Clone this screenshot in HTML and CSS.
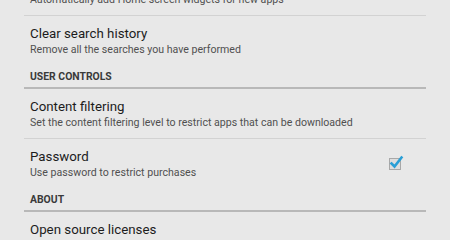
FILE: index.html
```html
<!DOCTYPE html>
<html>
<head>
<meta charset="utf-8">
<link rel="stylesheet" href="styles.css">
</head>
<body>
<div class="list">
  <div class="item">
    <div class="text">
      <div class="title">Add icon to Home screen</div>
      <div class="summary">Automatically add Home screen widgets for new apps</div>
    </div>
  </div>
  <div class="divider"></div>
  <div class="item">
    <div class="text">
      <div class="title">Clear search history</div>
      <div class="summary">Remove all the searches you have performed</div>
    </div>
  </div>
  <div class="header">USER CONTROLS</div>
  <div class="divider thick"></div>
  <div class="item">
    <div class="text">
      <div class="title">Content filtering</div>
      <div class="summary">Set the content filtering level to restrict apps that can be downloaded</div>
    </div>
  </div>
  <div class="divider"></div>
  <div class="item">
    <div class="text">
      <div class="title">Password</div>
      <div class="summary">Use password to restrict purchases</div>
    </div>
    <svg class="check" width="18" height="18" viewBox="0 0 18 18">
      <rect x="2.5" y="4.5" width="11" height="11" fill="#dedede" stroke="#a8a8a8" stroke-width="1"/>
      <path d="M4.5 9.5 L7.5 12.5 L14.5 3.5" fill="none" stroke="#2a9fd6" stroke-width="2.6" stroke-linecap="square"/>
    </svg>
  </div>
  <div class="header">ABOUT</div>
  <div class="divider thick"></div>
  <div class="item">
    <div class="text">
      <div class="title">Open source licenses</div>
      <div class="summary">License details for open source software</div>
    </div>
  </div>
</div>
</body>
</html>
```
FILE: styles.css
```css
html, body {
  margin: 0;
  padding: 0;
  background: #e8e8e8;
  overflow: hidden;
}
body {
  width: 450px;
  height: 240px;
  font-family: Roboto, "Noto Sans", sans-serif;
}
.list {
  margin: -34px 24px 0 24px;
  display: flex;
  flex-direction: column;
}
.item {
  height: 49px;
  box-sizing: border-box;
  padding: 10px 0 0 6px;
  display: flex;
  align-items: flex-start;
}
.text {
  flex: 1;
}
.title {
  font-size: 13.3px;
  line-height: 15px;
  color: #1c1c1c;
}
.summary {
  margin-top: 2px;
  font-size: 10.6px;
  line-height: 14px;
  color: #505050;
  white-space: nowrap;
}
.check {
  margin: 5px 21px 0 0;
}
.header {
  height: 22px;
  box-sizing: border-box;
  padding: 6px 0 0 6px;
  font-size: 10.4px;
  line-height: 11px;
  font-weight: bold;
  color: #3a3a3a;
}
.divider {
  height: 1px;
  background: #d2d2d2;
}
.divider.thick {
  height: 2px;
  background: #b8b8b8;
}
```
